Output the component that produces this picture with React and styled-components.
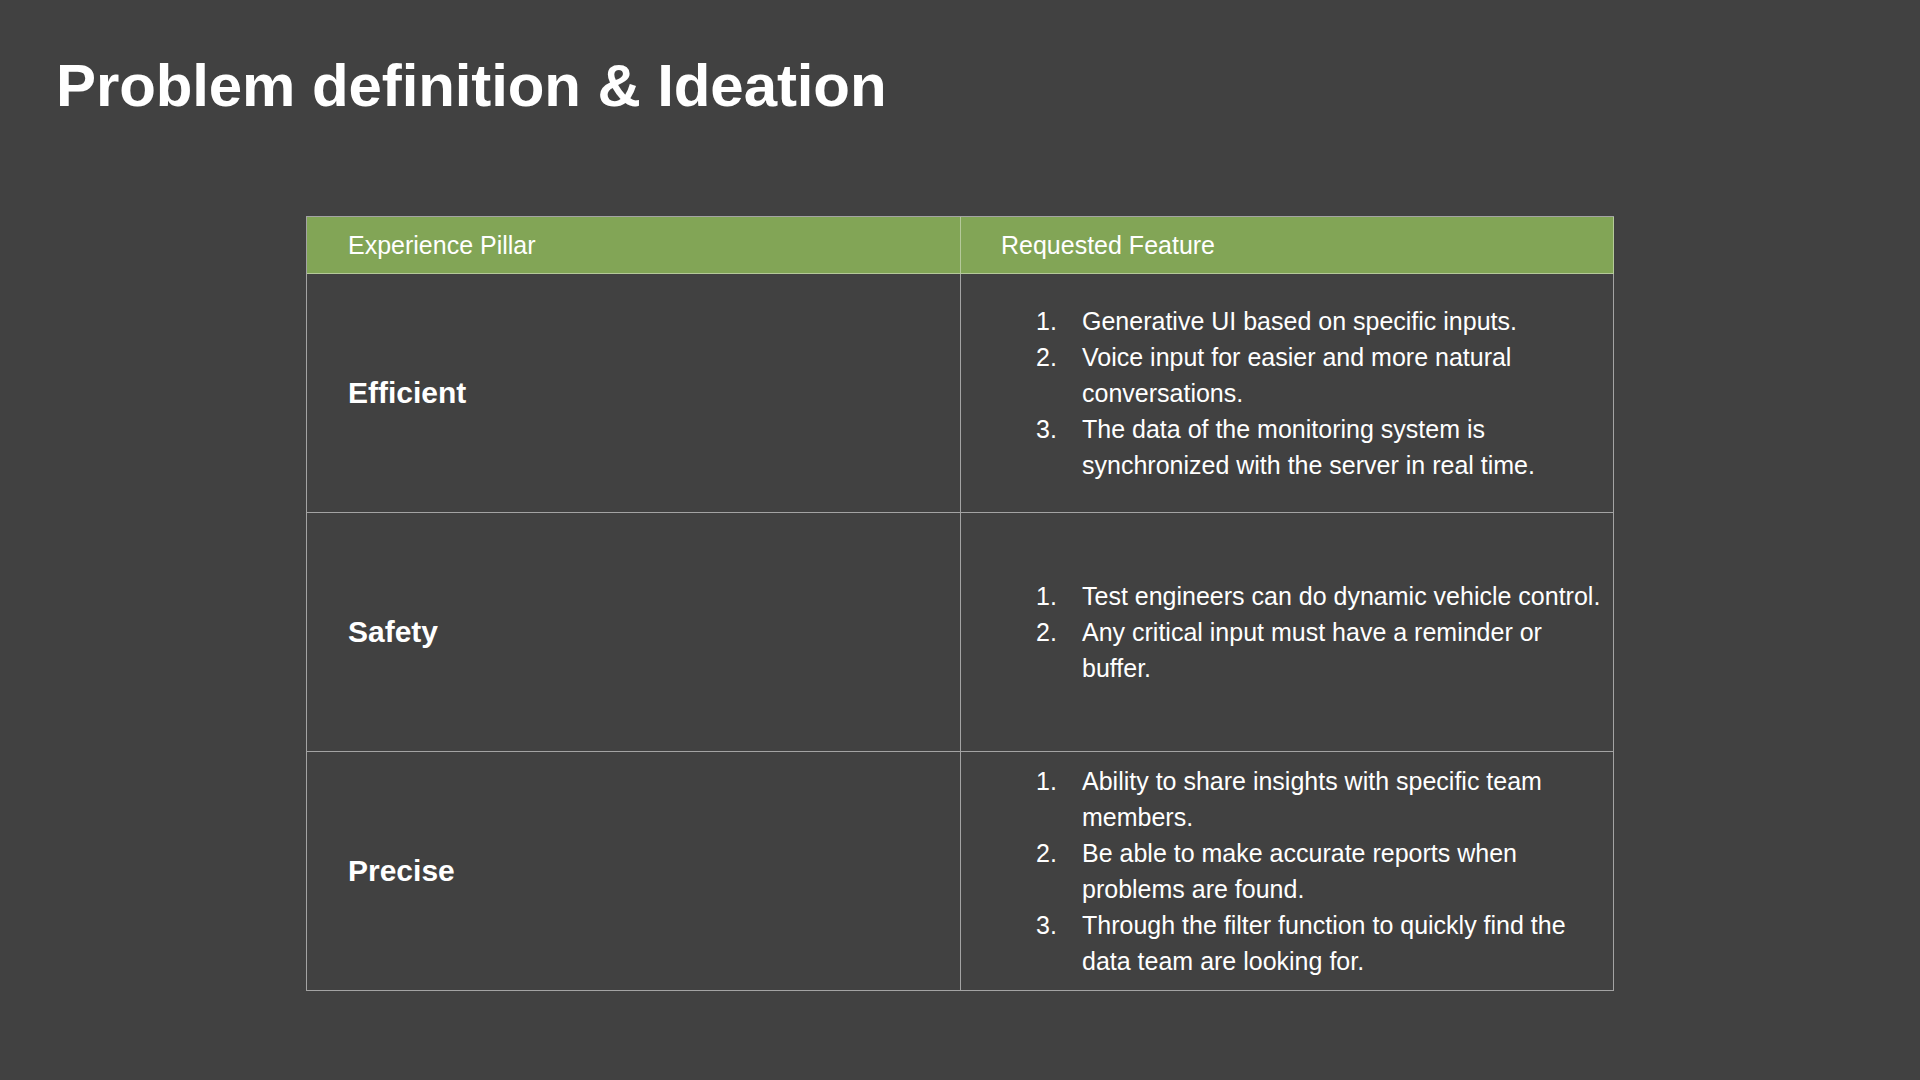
import { Fragment } from 'react';
import styled, { createGlobalStyle } from 'styled-components';

const GlobalStyle = createGlobalStyle`
  html, body {
    margin: 0;
    padding: 0;
    background: #414141;
  }
  * {
    box-sizing: border-box;
  }
`;

const Slide = styled.div`
  width: 1920px;
  min-height: 1080px;
  background: #414141;
  padding: 56px 56px 0;
  font-family: "Liberation Sans", Arial, Helvetica, sans-serif;
  color: #ffffff;
`;

const Title = styled.h1`
  margin: 0;
  font-size: 60px;
  line-height: 60px;
  font-weight: 700;
  letter-spacing: -0.1px;
`;

const Table = styled.div`
  width: 1308px;
  margin: 100px auto 0;
  display: grid;
  grid-template-columns: 654px 653px;
  grid-template-rows: 57px repeat(3, 239px);
  border-top: 1px solid #a3a3a3;
  border-left: 1px solid #a3a3a3;
`;

const HeadCell = styled.div`
  background: #82a556;
  border-right: 1px solid #b5c99a;
  border-bottom: 1px solid #b5c99a;
  display: flex;
  align-items: center;
  padding-left: ${({ $inset }) => $inset}px;
  font-size: 25px;
  color: #ffffff;

  &:last-child {
    border-right-color: #a3a3a3;
  }
`;

const Cell = styled.div`
  border-right: 1px solid #a3a3a3;
  border-bottom: 1px solid #a3a3a3;
  display: flex;
  align-items: center;
  padding-left: ${({ $inset }) => $inset}px;
`;

const Pillar = styled.span`
  font-size: 30px;
  font-weight: 700;
`;

const List = styled.ol`
  list-style: none;
  margin: 0;
  padding: 0;
  width: 574px;
`;

const Item = styled.li`
  display: grid;
  grid-template-columns: 46px 1fr;
  font-size: 25px;
  line-height: 36px;
`;

const Num = styled.span``;

const rows = [
  {
    pillar: 'Efficient',
    features: [
      'Generative UI based on specific inputs.',
      'Voice input for easier and more natural conversations.',
      'The data of the monitoring system is synchronized with the server in real time.',
    ],
  },
  {
    pillar: 'Safety',
    features: [
      'Test engineers can do dynamic vehicle control.',
      'Any critical input must have a reminder or buffer.',
    ],
  },
  {
    pillar: 'Precise',
    features: [
      'Ability to share insights with specific team members.',
      'Be able to make accurate reports when problems are found.',
      'Through the filter function to quickly find the data team are looking for.',
    ],
  },
];

export default function App() {
  return (
    <>
      <GlobalStyle />
      <Slide>
        <Title>Problem definition &amp; Ideation</Title>
        <Table>
          <HeadCell $inset={41}>Experience Pillar</HeadCell>
          <HeadCell $inset={40}>Requested Feature</HeadCell>
          {rows.map((row) => (
            <Fragment key={row.pillar}>
              <Cell $inset={41}>
                <Pillar>{row.pillar}</Pillar>
              </Cell>
              <Cell $inset={75}>
                <List>
                  {row.features.map((f, i) => (
                    <Item key={i}>
                      <Num>{i + 1}.</Num>
                      <span>{f}</span>
                    </Item>
                  ))}
                </List>
              </Cell>
            </Fragment>
          ))}
        </Table>
      </Slide>
    </>
  );
}
